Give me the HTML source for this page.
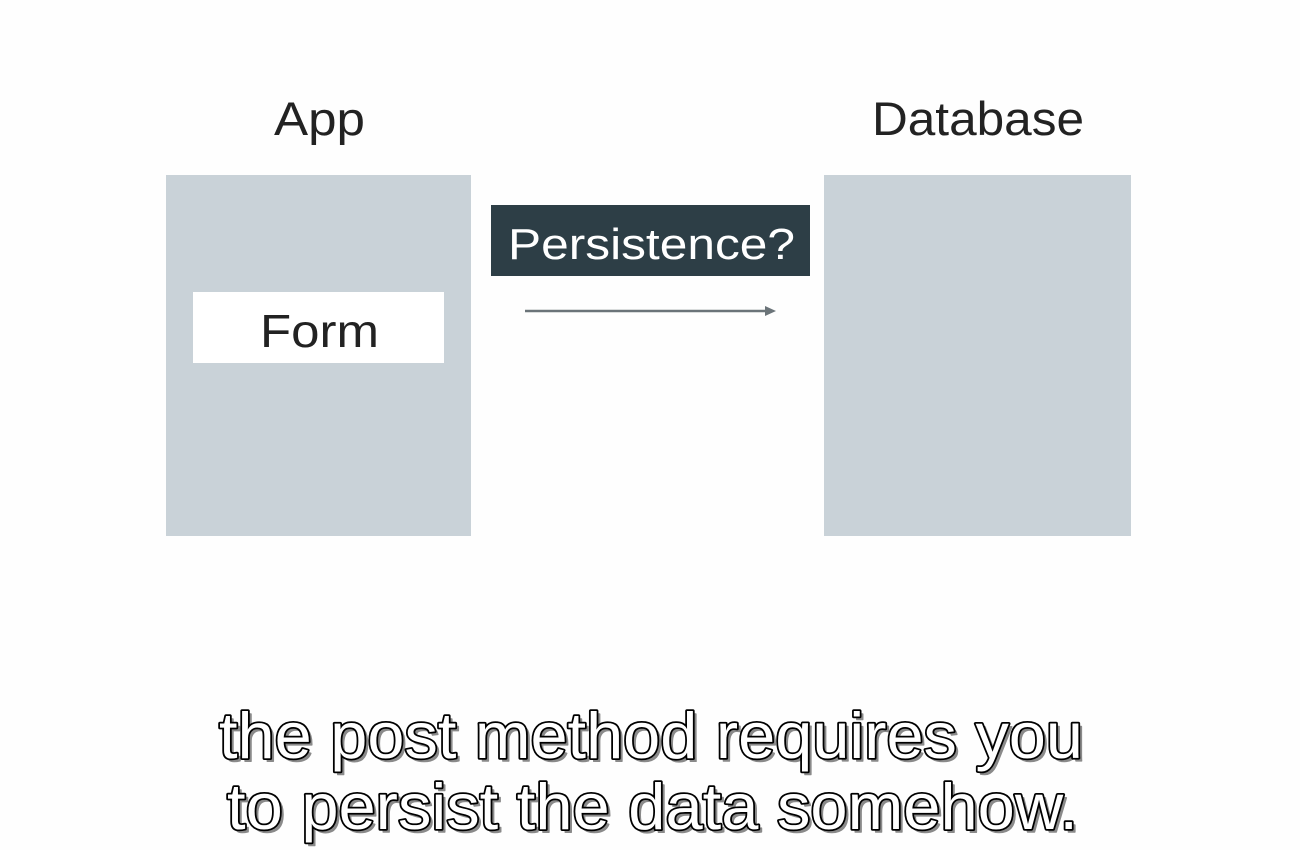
<!DOCTYPE html>
<html><head><meta charset="utf-8"><style>
html,body{margin:0;padding:0;background:#fff;width:1300px;height:850px;overflow:hidden}
svg{display:block}
</style></head><body>
<svg width="1300" height="850" viewBox="0 0 1300 850" xmlns="http://www.w3.org/2000/svg" font-family="Liberation Sans, sans-serif">
<rect width="1300" height="850" fill="#fefefe"/>
<rect x="166" y="175" width="305" height="361" fill="#c9d2d8"/>
<rect x="824" y="175" width="307" height="361" fill="#c9d2d8"/>
<rect x="193" y="292" width="251" height="71" fill="#fff"/>
<rect x="491" y="205" width="319" height="71" fill="#2d3e46"/>
<line x1="525" y1="311" x2="766" y2="311" stroke="#6b7479" stroke-width="2.5"/>
<path d="M765 306 L776 311 L765 316 Z" fill="#6b7479"/>
<text x="274" y="135" font-size="47" fill="#222" textLength="91" lengthAdjust="spacingAndGlyphs">App</text>
<text x="872" y="135" font-size="47" fill="#222" textLength="212" lengthAdjust="spacingAndGlyphs">Database</text>
<text x="260" y="347" font-size="46" fill="#222" textLength="119" lengthAdjust="spacingAndGlyphs">Form</text>
<text x="508" y="259" font-size="44" fill="#fff" textLength="287" lengthAdjust="spacingAndGlyphs">Persistence?</text>
<g font-size="65" stroke-linejoin="round">
<g transform="translate(3,3)" fill="#8a8a8a" stroke="#8a8a8a" stroke-width="1.5">
<text x="219" y="758" textLength="864" lengthAdjust="spacingAndGlyphs">the post method requires you</text>
<text x="227" y="829" textLength="851" lengthAdjust="spacingAndGlyphs">to persist the data somehow.</text>
</g>
<g fill="#fff" stroke="#000" stroke-width="3.5" paint-order="stroke">
<text x="219" y="758" textLength="864" lengthAdjust="spacingAndGlyphs">the post method requires you</text>
<text x="227" y="829" textLength="851" lengthAdjust="spacingAndGlyphs">to persist the data somehow.</text>
</g>
</g>
</svg>
</body></html>
